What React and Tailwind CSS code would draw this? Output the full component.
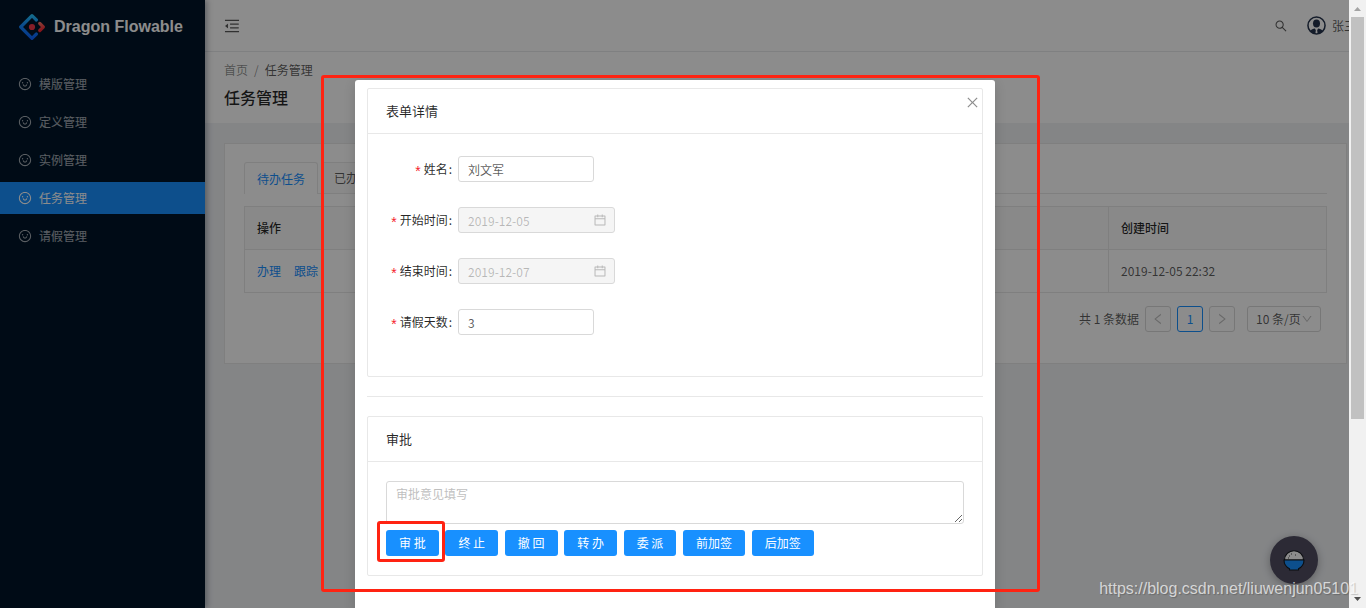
import React, { useState } from "react";
import {
    AiOutlineCalendar,
    AiOutlineClose,
    AiOutlineDown,
    AiOutlineLeft,
    AiOutlineMenuFold,
    AiOutlineRight,
    AiOutlineSearch,
    AiOutlineSmile,
} from "react-icons/ai";

const menuItems = ["模版管理", "定义管理", "实例管理", "任务管理", "请假管理"];
const actions = ["终 止", "撤 回", "转 办", "委 派", "前加签", "后加签"];

const Logo = () => (
    <svg className="h-[26px] w-[26px]" viewBox="0 0 26 26" fill="none" strokeWidth="3.2" strokeLinecap="round" strokeLinejoin="round">
        <defs>
            <linearGradient id="logo-blue" x1="13" y1="0" x2="13" y2="26" gradientUnits="userSpaceOnUse">
                <stop offset="0" stopColor="#29cdff" />
                <stop offset="0.4" stopColor="#148eff" />
                <stop offset="1" stopColor="#0a60ff" />
            </linearGradient>
            <linearGradient id="logo-red" x1="18" y1="8" x2="22" y2="18" gradientUnits="userSpaceOnUse">
                <stop offset="0" stopColor="#fa816e" />
                <stop offset="1" stopColor="#f51d2c" />
            </linearGradient>
        </defs>
        <path d="M17.4 6 13 1.700 1.700 13 13 24.300l4.400-4.300" stroke="url(#logo-blue)" />
        <path d="M20.800 9.500 24.300 13l-3.500 3.500" stroke="url(#logo-red)" />
        <circle cx="13" cy="13" r="3.1" fill="#f5384a" />
    </svg>
);

const Avatar = () => (
    <svg className="h-[19px] w-[19px] shrink-0" viewBox="0 0 20 20" fill="none">
        <circle cx="10" cy="10" r="9" stroke="#26344d" strokeWidth="1.6" />
        <ellipse cx="10" cy="8" rx="3.7" ry="4.2" fill="#26344d" />
        <path d="M3 15.8c1.6-1.7 3.6-2.3 5.3-2.6L9.3 15l-.5 3.8C6.300 18.600 4.300 17.500 3 15.800zM17 15.800c-1.600-1.700-3.600-2.300-5.300-2.600L10.700 15l.5 3.800c2.500-.2 4.500-1.300 5.800-3z" fill="#26344d" />
    </svg>
);

const Sidebar = () => (
    <aside className="relative z-10 w-[205px] shrink-0 bg-[#001529] shadow-[2px_0_6px_rgba(0,21,41,0.35)]">
        <a href="#home" className="flex h-[54px] items-center gap-[9px] pl-[19px]">
            <Logo />
            <span className="font-['Liberation_Sans',sans-serif] text-base font-bold text-white">Dragon Flowable</span>
        </a>
        <nav className="flex flex-col gap-[6px] pt-[14px]">
            {menuItems.map((item) => (
                <a
                    key={item}
                    href="#menu"
                    className={
                        item === "任务管理"
                            ? "flex h-8 items-center gap-[7px] bg-[#1890ff] pl-[18px] text-white"
                            : "flex h-8 items-center gap-[7px] pl-[18px] text-white/65"
                    }
                >
                    <AiOutlineSmile className="h-[14px] w-[14px]" />
                    {item}
                </a>
            ))}
        </nav>
    </aside>
);

const TopBar = () => (
    <header className="flex h-[52px] items-center justify-between border-b border-[#e8eaec] bg-white pl-[18px] shadow-[0_1px_3px_rgba(0,21,41,0.08)]">
        <button type="button" aria-label="收起菜单">
            <AiOutlineMenuFold className="h-[18px] w-[18px]" />
        </button>
        <div className="-mr-[7px] flex items-center">
            <button type="button" aria-label="搜索" className="mr-[19px]">
                <AiOutlineSearch className="h-[14px] w-[14px]" />
            </button>
            <Avatar />
            <span className="ml-[6px] whitespace-nowrap">张三</span>
        </div>
    </header>
);

const Pagination = () => (
    <div className="mt-[13px] mr-[6px] flex items-center justify-end gap-[6px]">
        <span>共 1 条数据</span>
        <button type="button" aria-label="上一页" className="flex h-[26px] w-[26px] items-center justify-center rounded-[3px] border border-[#d9d9d9] text-black/25">
            <AiOutlineLeft className="h-[14px] w-[14px]" />
        </button>
        <button type="button" className="flex h-[26px] w-[26px] items-center justify-center rounded-[3px] border border-[#1890ff] text-[#1890ff]">
            1
        </button>
        <button type="button" aria-label="下一页" className="flex h-[26px] w-[26px] items-center justify-center rounded-[3px] border border-[#d9d9d9] text-black/25">
            <AiOutlineRight className="h-[14px] w-[14px]" />
        </button>
        <div className="relative ml-[6px]">
            <select aria-label="每页条数" className="h-[26px] w-[74px] appearance-none rounded-[3px] border border-[#d9d9d9] pl-2">
                <option>10 条/页</option>
            </select>
            <AiOutlineDown className="pointer-events-none absolute top-[7px] right-2 h-3 w-3 text-black/25" />
        </div>
    </div>
);

const TaskPage = () => (
    <main className="min-w-0 flex-1">
        <TopBar />
        <div className="bg-white px-[19px] pt-2 pb-[13px]">
            <div className="flex gap-[6px] leading-5">
                <a href="#home" className="text-black/45">首页</a>
                <span className="text-black/45">/</span>
                <span>任务管理</span>
            </div>
            <h1 className="mt-1 text-base leading-[26px] font-medium text-black/85">任务管理</h1>
        </div>
        <section className="mt-5 mr-[2px] ml-[19px] border border-[#e8e8e8] bg-white px-[19px] pt-[18px] pb-[31px]">
            <div className="flex h-8" role="tablist">
                <button type="button" role="tab" aria-selected="true" className="rounded-t-[3px] border border-b-0 border-[#e8e8e8] px-3 text-[#1890ff]">
                    待办任务
                </button>
                <span className="w-[3px] border-b border-[#e8e8e8]" />
                <button type="button" role="tab" aria-selected="false" className="rounded-t-[3px] border border-[#e8e8e8] bg-[#fafafa] px-3">
                    已办任务
                </button>
                <span className="flex-1 border-b border-[#e8e8e8]" />
            </div>
            <table className="mt-3 w-full border-collapse text-left">
                <thead>
                    <tr className="h-[43px] bg-[#fafafa] text-black/85">
                        <th className="border border-[#e8e8e8] px-3 font-medium">操作</th>
                        <th className="w-[218px] border border-[#e8e8e8] px-3 font-medium">创建时间</th>
                    </tr>
                </thead>
                <tbody>
                    <tr className="h-[43px]">
                        <td className="border border-[#e8e8e8] px-3">
                            <a href="#handle" className="mr-[13px] text-[#1890ff]">办理</a>
                            <a href="#trace" className="text-[#1890ff]">跟踪</a>
                        </td>
                        <td className="border border-[#e8e8e8] px-3">2019-12-05 22:32</td>
                    </tr>
                </tbody>
            </table>
            <Pagination />
        </section>
    </main>
);

const FormRow = ({ id, label, children }) => (
    <div className="flex items-center">
        <label htmlFor={id} className="mr-[6px] flex w-[66px] items-center justify-end pb-px text-black/85">
            <span className="mr-[3px] pt-1 font-['Liberation_Sans',sans-serif] text-sm leading-none text-[#f5222d]">*</span>
            {label}
            <span className="ml-px">:</span>
        </label>
        {children}
    </div>
);

const DateInput = ({ id, value }) => (
    <div className="relative">
        <input
            id={id}
            type="text"
            value={value}
            disabled
            className="h-[26px] w-[157px] rounded-[3px] border border-[#d9d9d9] bg-[#f5f5f5] px-[9px] text-black/25"
        />
        <AiOutlineCalendar className="absolute top-[6px] right-2 h-[14px] w-[14px] text-black/25" />
    </div>
);

const Card = ({ title, children }) => (
    <section className="rounded-[2px] border border-[#e8e8e8]">
        <h2 className="border-b border-[#e8e8e8] px-[18px] py-3 text-[13px] leading-5 text-black/85">{title}</h2>
        {children}
    </section>
);

const ApprovalModal = () => {
    const [name, setName] = useState("刘文军");
    const [days, setDays] = useState("3");
    const [comment, setComment] = useState("");

    return (
        <div role="dialog" aria-label="表单详情" className="relative h-full w-[640px] max-w-full rounded-t-[3px] bg-white px-3 py-2 shadow-[0_4px_12px_rgba(0,0,0,0.15)]">
            <button type="button" aria-label="关闭" className="absolute top-[15px] right-[15px] text-black/45">
                <AiOutlineClose className="h-[15px] w-[15px]" />
            </button>
            <div className="relative">
                <Card title="表单详情">
                    <form className="flex flex-col gap-[25px] px-[18px] pt-[22px] pb-[41px]">
                        <FormRow id="name" label="姓名">
                            <input
                                id="name"
                                type="text"
                                value={name}
                                onChange={(e) => setName(e.target.value)}
                                className="h-[26px] w-[136px] rounded-[3px] border border-[#d9d9d9] px-[9px]"
                            />
                        </FormRow>
                        <FormRow id="start" label="开始时间">
                            <DateInput id="start" value="2019-12-05" />
                        </FormRow>
                        <FormRow id="end" label="结束时间">
                            <DateInput id="end" value="2019-12-07" />
                        </FormRow>
                        <FormRow id="days" label="请假天数">
                            <input
                                id="days"
                                type="text"
                                value={days}
                                onChange={(e) => setDays(e.target.value)}
                                className="h-[26px] w-[136px] rounded-[3px] border border-[#d9d9d9] px-[9px]"
                            />
                        </FormRow>
                    </form>
                </Card>
                <hr className="my-[19px] border-[#e8e8e8]" />
                <Card title="审批">
                    <div className="px-[18px] py-[19px]">
                        <textarea
                            aria-label="审批意见"
                            placeholder="审批意见填写"
                            value={comment}
                            onChange={(e) => setComment(e.target.value)}
                            className="block h-[43px] w-full rounded-[3px] border border-[#d9d9d9] px-[9px] py-[3px] leading-[18px] placeholder:text-[#bfbfbf]"
                        />
                        <div className="mt-[6px] h-[26px]">
                            <span className="relative mr-1 inline-block">
                                <button type="button" className="h-[26px] rounded-[3px] bg-[#1890ff] px-[13px] text-white">审 批</button>
                                <span className="pointer-events-none absolute -top-[9px] -right-[6px] -bottom-[6px] -left-[9px] rounded-[3px] border-3 border-[#ff2312]" />
                            </span>{" "}
                            {actions.map((action) => (
                                <React.Fragment key={action}>
                                    <button type="button" className="mr-1 h-[26px] rounded-[3px] bg-[#1890ff] px-[13px] text-white">{action}</button>{" "}
                                </React.Fragment>
                            ))}
                        </div>
                    </div>
                </Card>
                {/* Highlight frame around the dialog */}
                <div className="pointer-events-none absolute -top-[13px] -right-[57px] -bottom-4 -left-[46px] rounded-[3px] border-3 border-[#ff2312]" />
            </div>
        </div>
    );
};

const RiceButton = () => (
    <button type="button" aria-label="助手" className="absolute right-[31px] bottom-6 z-10 flex h-12 w-12 items-center justify-center rounded-full bg-[#504d62] shadow-[0_2px_8px_rgba(0,0,0,0.3)]">
        <svg className="h-[22px] w-[22px]" viewBox="0 0 22 22" stroke="#14181c" strokeWidth="1.1">
            <path d="M1.500 11a9.500 9.300 0 0 1 19 0z" fill="#fff" />
            <path d="M1 11h20c0 4-2 7-5.500 8.700V21h-9v-1.300C3 18 1 15 1 11z" fill="#1890ff" />
            <path d="M6 7h1M8 5h1M5 9h1M12 6h1" strokeWidth="0.8" />
        </svg>
    </button>
);

const Scrollbar = () => (
    <div className="flex w-[17px] shrink-0 flex-col items-center bg-[#f1f1f1]">
        <svg className="h-[17px] w-[17px]" viewBox="0 0 17 17">
            <path d="M5 11h7L8.500 7z" fill="#a3a3a3" />
        </svg>
        <div className="w-full flex-1 px-[2px]">
            <div className="h-[70%] bg-[#c1c1c1]" />
        </div>
        <svg className="h-[17px] w-[17px]" viewBox="0 0 17 17">
            <path d="M5 6h7l-3.500 4z" fill="#505050" />
        </svg>
    </div>
);

const App = () => (
    <div className="relative flex h-screen overflow-hidden bg-[#f0f2f5] font-['Noto_Sans_CJK_SC',sans-serif] text-xs text-black/65">
        <div className="relative flex min-w-0 flex-1 overflow-hidden">
            <Sidebar />
            <TaskPage />
            <RiceButton />
            <div className="absolute inset-0 z-20 flex justify-center bg-black/45 pt-20 pl-px">
                <ApprovalModal />
            </div>
        </div>
        <Scrollbar />
        <div className="pointer-events-none absolute right-2 bottom-[7px] z-30 font-['Liberation_Sans',sans-serif] text-base text-white/70 [text-shadow:1px_1px_1px_rgba(0,0,0,0.2)]">
            https://blog.csdn.net/liuwenjun05101
        </div>
    </div>
);

export default App;
